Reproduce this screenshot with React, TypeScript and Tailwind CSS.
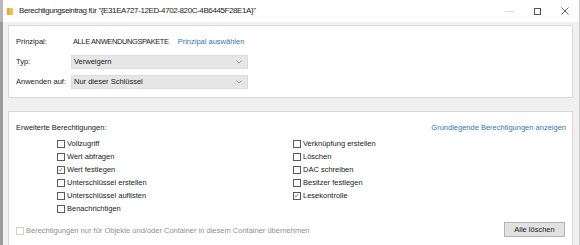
import React from "react";

const font = { fontFamily: '"Liberation Sans", Arial, sans-serif' };

function Box({ checked = false, disabled = false }: { checked?: boolean; disabled?: boolean }) {
  return (
    <span
      className={
        "relative inline-block w-[8px] h-[8px] shrink-0 border bg-white " +
        (disabled ? "border-[#cfcfcf]" : "border-[#5a5a5a]")
      }
    >
      {checked && (
        <svg viewBox="0 0 8 8" className="absolute left-0 top-0 w-[6px] h-[6px]">
          <path d="M0.8 3.6 L2.6 5.4 L5.6 1.2" fill="none" stroke="#444" strokeWidth="0.8" />
        </svg>
      )}
    </span>
  );
}

function Check({ label, checked = false }: { label: string; checked?: boolean }) {
  return (
    <div className="flex items-center h-[13px] gap-[2px]">
      <Box checked={checked} />
      <span className="leading-none whitespace-nowrap">{label}</span>
    </div>
  );
}

function Select({ value }: { value: string }) {
  return (
    <div className="flex items-center justify-between w-[177px] h-[14px] bg-[#e6e6e6] border border-[#dcdcdc] pl-[2px] pr-[5px]">
      <span className="leading-none whitespace-nowrap">{value}</span>
      <svg viewBox="0 0 8 5" className="w-[6px] h-[4px]">
        <path d="M0.5 0.5 L4 4 L7.5 0.5" fill="none" stroke="#7a7a7a" strokeWidth="0.9" />
      </svg>
    </div>
  );
}

export default function App() {
  return (
    <div
      className="w-[580px] h-[245px] overflow-hidden flex bg-[#f0f0f0] text-[7.5px] text-[#1a1a1a]"
      style={font}
    >
      <div className="w-[3px] shrink-0 bg-[#8a8a8a] flex flex-col">
        <div className="h-[22px] bg-[#b8b8b8]" />
        <div className="flex-1 bg-[#9a9a9a]" />
      </div>
      <div className="flex-1 flex flex-col border-r border-[#c8c8c8]">
        {/* title bar */}
        <div className="h-[22px] bg-white flex items-center pl-[4px] shrink-0">
          <svg viewBox="0 0 6 7" className="w-[6px] h-[7px] shrink-0">
            <rect x="0" y="0" width="6" height="7" fill="#f2c04a" />
            <rect x="0" y="0" width="2" height="7" fill="#e2a82a" />
          </svg>
          <span className="ml-[6px] text-[8px] tracking-[-0.4px] leading-none text-[#222] whitespace-nowrap">
            Berechtigungseintrag für "{"{"}E31EA727-12ED-4702-820C-4B6445F28E1A{"}"}"
          </span>
          <div className="ml-auto flex items-center h-full">
            <div className="w-[28px] flex justify-center">
              <div className="w-[9px] h-px bg-[#dcdcdc]" />
            </div>
            <div className="w-[28px] flex justify-center">
              <div className="w-[7px] h-[7px] border border-[#555]" />
            </div>
            <div className="w-[28px] flex justify-center">
              <svg viewBox="0 0 8 8" className="w-[8px] h-[8px]">
                <path d="M0.5 0.5 L7.5 7.5 M7.5 0.5 L0.5 7.5" stroke="#555" strokeWidth="0.9" />
              </svg>
            </div>
          </div>
        </div>

        {/* top panel */}
        <div className="mt-[3px] ml-[5px] mr-[6px] h-[73px] bg-white border border-[#d9d9d9] pt-[9px] pl-[7px] flex flex-col gap-[6px]">
          <div className="flex items-center h-[14px]">
            <span className="w-[57px] leading-none whitespace-nowrap">Prinzipal:</span>
            <span className="leading-none whitespace-nowrap tracking-[-0.4px]">ALLE ANWENDUNGSPAKETE</span>
            <span className="ml-[9px] leading-none text-[#2f78b8] whitespace-nowrap">Prinzipal auswählen</span>
          </div>
          <div className="flex items-center h-[14px]">
            <span className="w-[55px] leading-none whitespace-nowrap">Typ:</span>
            <Select value="Verweigern" />
          </div>
          <div className="flex items-center h-[14px]">
            <span className="w-[55px] leading-none whitespace-nowrap">Anwenden auf:</span>
            <Select value="Nur dieser Schlüssel" />
          </div>
        </div>

        {/* bottom panel */}
        <div className="mt-[13px] ml-[5px] mr-[6px] flex-1 bg-white border border-[#d9d9d9] border-b-0 pt-[11px] pl-[7px] pr-[6px] flex flex-col">
          <div className="flex items-center justify-between h-[10px]">
            <span className="leading-none whitespace-nowrap">Erweiterte Berechtigungen:</span>
            <span className="leading-none text-[#2f78b8] whitespace-nowrap">Grundlegende Berechtigungen anzeigen</span>
          </div>
          <div className="flex mt-[4px]">
            <div className="w-[277px] pl-[41px] flex flex-col">
              <Check label="Vollzugriff" />
              <Check label="Wert abfragen" />
              <Check label="Wert festlegen" checked />
              <Check label="Unterschlüssel erstellen" />
              <Check label="Unterschlüssel auflisten" />
              <Check label="Benachrichtigen" />
            </div>
            <div className="flex flex-col">
              <Check label="Verknüpfung erstellen" />
              <Check label="Löschen" />
              <Check label="DAC schreiben" />
              <Check label="Besitzer festlegen" />
              <Check label="Lesekontrolle" checked />
            </div>
          </div>
          <div className="flex items-center justify-between mt-[11px] h-[10px]">
            <div className="flex items-center gap-[2px] text-[#8f8f8f]">
              <Box disabled />
              <span className="leading-none whitespace-nowrap">
                Berechtigungen nur für Objekte und/oder Container in diesem Container übernehmen
              </span>
            </div>
            <div className="w-[61px] h-[15px] bg-[#e1e1e1] border border-[#b5b5b5] flex items-center justify-center mr-[1px] -mt-[3px]">
              <span className="leading-none whitespace-nowrap">Alle löschen</span>
            </div>
          </div>
        </div>
      </div>
    </div>
  );
}
